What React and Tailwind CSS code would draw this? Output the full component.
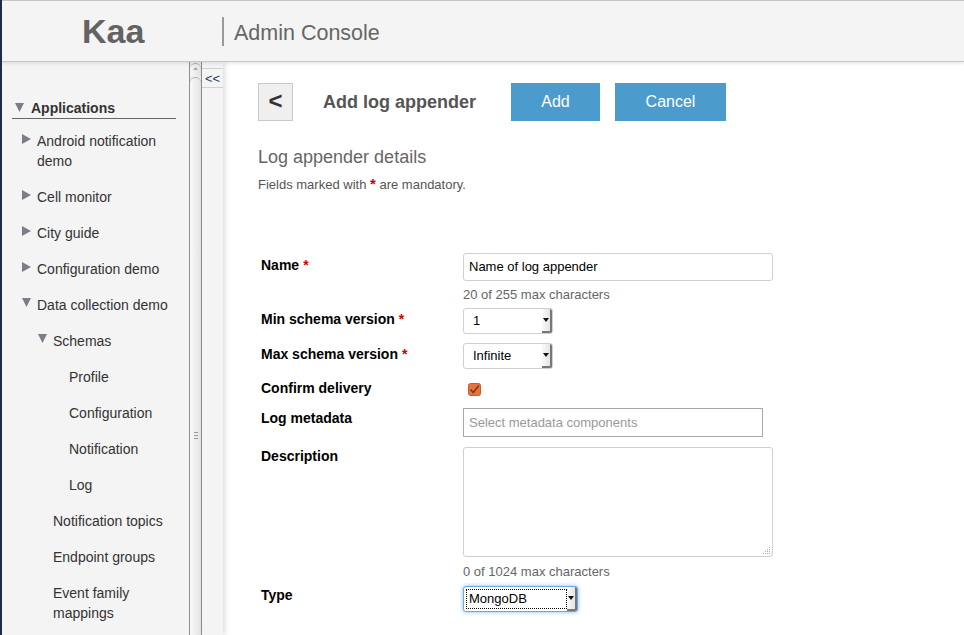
import React from 'react';

const RightTri = () => (
  <svg width="9" height="10" viewBox="0 0 9 10" className="shrink-0">
    <path d="M0 0 L9 5 L0 10 Z" fill="#7a7f87" />
  </svg>
);

const DownTri = ({ size = 9 }) => (
  <svg width={size} height={size} viewBox="0 0 10 10" className="shrink-0">
    <path d="M0 0 L10 0 L5 10 Z" fill="#7a7f87" />
  </svg>
);

const NavItem = ({ indent, tri, children }) => (
  <div className="flex py-2 leading-5 text-[14px] text-[#333]" style={{ paddingLeft: indent }}>
    <div className="w-[15px] shrink-0 pt-[3px]">
      {tri === 'right' && <RightTri />}
      {tri === 'down' && <DownTri />}
    </div>
    <div>{children}</div>
  </div>
);

const SelectBox = ({ width, value, focused }) => (
  <div
    className={
      'flex h-[26px] bg-white rounded-[3px] border ' +
      (focused ? 'border-[#6ea6e6] shadow-[0_0_4px_#86b6ee]' : 'border-[#cfcfcf]')
    }
    style={{ width }}
  >
    <div className="flex-1 flex items-center pl-[2px] py-[2px]">
      <div
        className={
          'h-full w-full flex items-center text-[13px] text-black ' +
          (focused ? 'border border-dotted border-black pl-[2px]' : 'pl-[7px]')
        }
      >
        {value}
      </div>
    </div>
    <div className="w-[10px] flex items-center justify-center bg-gradient-to-r from-[#fafafa] to-[#e4e4e4] border-r-2 border-b-2 border-[#777] rounded-r-[2px]">
      <svg width="6" height="4" viewBox="0 0 6 4">
        <path d="M0 0 L6 0 L3 4 Z" fill="#111" />
      </svg>
    </div>
  </div>
);

const Label = ({ children, req, pt = 0 }) => (
  <div className="w-[202px] shrink-0 text-[14px] font-bold text-black leading-[18px]" style={{ paddingTop: pt }}>
    {children}
    {req && <span className="text-[#d00000] ml-[4px]">*</span>}
  </div>
);

export default function App() {
  return (
    <div className="h-[635px] w-[964px] overflow-hidden flex flex-col border-l-2 border-[#1d2c47] font-['Liberation_Sans',Arial,sans-serif] bg-white">
      {/* header */}
      <div className="h-[62px] shrink-0 flex items-center bg-[#f4f4f4] border-t border-[#a9a9a9] border-b border-[#c6c6c6] shadow-[0_1px_4px_rgba(0,0,0,0.12)] relative z-10">
        <div className="w-[220px] pl-[80px] text-[34px] font-bold text-[#636363] leading-none pb-[1px]">Kaa</div>
        <div className="w-[2px] h-[29px] bg-[#9a9a9a]"></div>
        <div className="ml-[10px] text-[21.5px] text-[#666] pt-[4px]">Admin Console</div>
      </div>

      <div className="flex flex-1 min-h-0">
        {/* sidebar */}
        <div className="w-[187px] shrink-0 bg-[#f4f4f4] pl-[10px] pr-[13px] pt-[36px]">
          <div className="flex items-center h-[21px] pb-[1px] border-b border-[#666] leading-5">
            <div className="w-[19px] pl-[3px]"><DownTri size={9} /></div>
            <span className="text-[14px] font-bold text-[#333]">Applications</span>
          </div>
          <div className="mt-[4px]">
            <NavItem indent={10} tri="right">Android notification demo</NavItem>
            <NavItem indent={10} tri="right">Cell monitor</NavItem>
            <NavItem indent={10} tri="right">City guide</NavItem>
            <NavItem indent={10} tri="right">Configuration demo</NavItem>
            <NavItem indent={10} tri="down">Data collection demo</NavItem>
            <NavItem indent={26} tri="down">Schemas</NavItem>
            <NavItem indent={42}>Profile</NavItem>
            <NavItem indent={42}>Configuration</NavItem>
            <NavItem indent={42}>Notification</NavItem>
            <NavItem indent={42}>Log</NavItem>
            <NavItem indent={26}>Notification topics</NavItem>
            <NavItem indent={26}>Endpoint groups</NavItem>
            <NavItem indent={26}>Event family mappings</NavItem>
          </div>
        </div>

        {/* scrollbar */}
        <div className="w-[13px] shrink-0 flex flex-col bg-[#ececec] border-l border-r border-[#8f8f8f]">
          <div className="h-[13px] mt-[1px] rounded-t-full bg-gradient-to-r from-[#f8f8f8] to-[#e2e2e2] border-t border-[#aaa] flex items-start justify-center pt-[3px]">
            <svg width="5" height="3" viewBox="0 0 5 3"><path d="M0 3 L5 3 L2.5 0 Z" fill="#aaa" /></svg>
          </div>
          <div className="flex-1 mt-[1px] rounded-t-full bg-gradient-to-r from-[#f9f9f9] to-[#e4e4e4] border-t border-[#aaa] flex flex-col items-center pt-[354px] gap-[2px]">
            <div className="w-[4px] h-px bg-[#999]"></div>
            <div className="w-[4px] h-px bg-[#999]"></div>
            <div className="w-[4px] h-px bg-[#999]"></div>
          </div>
        </div>

        {/* collapse strip */}
        <div className="w-[21px] shrink-0 bg-[#f4f4f4] pt-[6px] shadow-[2px_0_5px_rgba(0,0,0,0.14)] relative z-[5]">
          <div className="h-[20px] border-t border-b border-[#d0d0d0] flex items-center justify-center text-[13px] text-[#2a3a60] leading-none">&lt;&lt;</div>
        </div>

        {/* main */}
        <div className="flex-1 bg-white pl-[35px] pt-[21px]">
          <div className="flex items-center h-[38px]">
            <div className="w-[35px] h-[38px] bg-[#efefef] border border-[#c9c9c9] flex items-center justify-center text-[24px] font-bold text-[#333] leading-none pb-[2px]">&lt;</div>
            <div className="ml-[30px] text-[18px] font-bold text-[#555]">Add log appender</div>
            <div className="ml-[35px] w-[89px] h-[38px] bg-[#4c9bcd] text-white text-[16px] flex items-center justify-center">Add</div>
            <div className="ml-[15px] w-[111px] h-[38px] bg-[#4c9bcd] text-white text-[16px] flex items-center justify-center">Cancel</div>
          </div>
          <div className="mt-[25px] text-[18px] leading-[22px] text-[#666]">Log appender details</div>
          <div className="mt-[8px] text-[13px] leading-[16px] text-[#555]">
            Fields marked with <span className="text-[#d00000] font-bold text-[15px]">*</span> are mandatory.
          </div>

          <div className="mt-[60px] pl-[3px]">
            <div className="flex">
              <Label req pt={3}>Name</Label>
              <div>
                <div className="w-[310px] h-[28px] border border-[#cfcfcf] rounded-[3px] flex items-center pl-[5px] text-[13px] text-black">Name of log appender</div>
                <div className="mt-[6px] text-[13px] leading-[16px] text-[#666]">20 of 255 max characters</div>
              </div>
            </div>
            <div className="flex mt-[5px]">
              <Label req pt={2}>Min schema version</Label>
              <SelectBox width={90} value="1" />
            </div>
            <div className="flex mt-[9px]">
              <Label req pt={2}>Max schema version</Label>
              <SelectBox width={90} value="Infinite" />
            </div>
            <div className="flex mt-[10px]">
              <Label>Confirm delivery</Label>
              <div className="ml-[5px] mt-[4px]">
                <svg width="13" height="13" viewBox="0 0 13 13">
                  <rect x="0.5" y="0.5" width="12" height="12" rx="2" fill="#e7743f" stroke="#c95a2a" />
                  <path d="M2.5 6.5 L5.2 9.5 L10.8 2.5" fill="none" stroke="#7a3a1c" strokeWidth="1.6" />
                </svg>
              </div>
            </div>
            <div className="flex mt-[11px]">
              <Label pt={1}>Log metadata</Label>
              <div className="w-[300px] h-[29px] border border-[#a8a8a8] flex items-center pl-[5px] text-[13px] text-[#999]">Select metadata components</div>
            </div>
            <div className="flex mt-[10px]">
              <Label>Description</Label>
              <div>
                <div className="w-[310px] h-[110px] border border-[#cfcfcf] rounded-[3px] relative">
                  <svg width="8" height="8" viewBox="0 0 8 8" className="absolute right-[1px] bottom-[1px]">
                    <g fill="#aaa">
                      <rect x="6" y="0" width="1" height="1" />
                      <rect x="4" y="2" width="1" height="1" />
                      <rect x="6" y="2" width="1" height="1" />
                      <rect x="2" y="4" width="1" height="1" />
                      <rect x="4" y="4" width="1" height="1" />
                      <rect x="6" y="4" width="1" height="1" />
                      <rect x="0" y="6" width="1" height="1" />
                      <rect x="2" y="6" width="1" height="1" />
                      <rect x="4" y="6" width="1" height="1" />
                      <rect x="6" y="6" width="1" height="1" />
                    </g>
                  </svg>
                </div>
                <div className="mt-[7px] text-[13px] leading-[16px] text-[#666]">0 of 1024 max characters</div>
              </div>
            </div>
            <div className="flex mt-[6px]">
              <Label>Type</Label>
              <SelectBox width={115} value="MongoDB" focused />
            </div>
          </div>
        </div>
      </div>
    </div>
  );
}
